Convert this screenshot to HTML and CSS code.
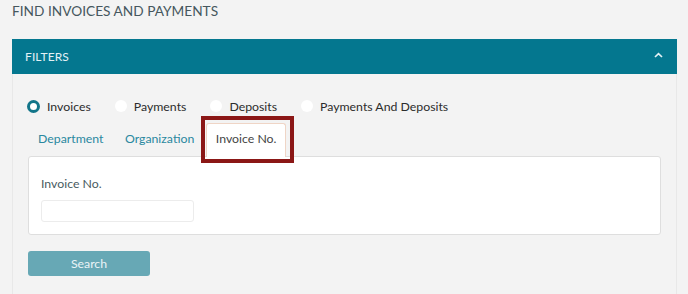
FILE: index.html
```html
<!DOCTYPE html>
<html>
<head>
<meta charset="utf-8">
<link rel="stylesheet" href="styles.css">
</head>
<body>
<div class="page">
  <h1 class="title">FIND INVOICES AND PAYMENTS</h1>
  <section class="panel">
    <header class="panel-head">
      <span class="panel-title">FILTERS</span>
      <svg class="chevron" width="9" height="6" viewBox="0 0 9 6"><path d="M1 5 L4.5 1.6 L8 5" fill="none" stroke="#e3f1f5" stroke-width="1.7"/></svg>
    </header>
    <div class="panel-body">
      <div class="radios">
        <label class="radio"><span class="dot checked"></span>Invoices</label>
        <label class="radio"><span class="dot"></span>Payments</label>
        <label class="radio"><span class="dot"></span>Deposits</label>
        <label class="radio"><span class="dot"></span>Payments And Deposits</label>
      </div>
      <div class="tabs">
        <span class="tab">Department</span>
        <span class="tab">Organization</span>
        <span class="tab active">Invoice No.<span class="highlight"></span></span>
      </div>
      <div class="card">
        <div class="field-label">Invoice No.</div>
        <div class="input"></div>
      </div>
      <button class="search">Search</button>
    </div>
  </section>
</div>
</body>
</html>
```
FILE: styles.css
```css
* { box-sizing: border-box; }
html, body { margin: 0; padding: 0; }
body {
  background: #f3f3f3;
  font-family: Lato, "Open Sans", sans-serif;
  width: 688px;
  height: 294px;
  overflow: hidden;
}
.page { padding: 0 11px 0 12px; }
.title {
  margin: 0;
  padding-top: 3px;
  height: 39px;
  font-size: 13.7px;
  line-height: 1.2;
  font-weight: 400;
  color: #46575e;
}
.panel {
  border: 1px solid #e8e8e8;
  border-top: none;
  height: 260px;
}
.panel-head {
  background: #04778f;
  height: 35px;
  margin: 0 -1px;
  display: flex;
  align-items: center;
  justify-content: space-between;
  padding: 0 14px 0 13px;
}
.panel-title {
  color: #e3f1f5;
  font-size: 12px;
  letter-spacing: 0.1px;
}
.chevron { margin-top: -3px; }
.panel-body { padding: 24px 15px 0 15px; }
.radios {
  display: flex;
  align-items: center;
  height: 16px;
  margin-left: -1px;
  font-size: 12.3px;
  color: #2c2c2c;
}
.radio { display: flex; align-items: center; margin-right: 24px; }
.dot {
  width: 12px;
  height: 12px;
  border-radius: 50%;
  background: #ffffff;
  margin-right: 7px;
}
.dot.checked {
  width: 13px;
  height: 13px;
  border: 3.5px solid #127589;
}
.tabs {
  display: flex;
  align-items: stretch;
  margin-top: 9px;
  height: 33px;
  font-size: 12.3px;
}
.tab {
  display: flex;
  align-items: center;
  padding: 0 9px 4px 9px;
  border: 1px solid transparent;
  border-bottom: none;
  margin-right: 1.5px;
  color: #2a88a0;
}
.tab.active {
  position: relative;
  z-index: 1;
  margin-bottom: -1px;
  color: #454545;
  background: #ffffff;
  border-color: #efd5c6;
  border-radius: 3px 3px 0 0;
}
.highlight {
  position: absolute;
  top: -8px;
  left: -6px;
  right: -9px;
  bottom: -6px;
  border: 4px solid #8b1716;
  pointer-events: none;
}
.card {
  background: #ffffff;
  border: 1px solid #dedede;
  border-radius: 3px;
  padding: 20px 12px 12px 12px;
}
.field-label {
  font-size: 12.3px;
  line-height: 1.2;
  color: #4a5b61;
}
.input {
  width: 153px;
  height: 22px;
  margin-top: 8px;
  background: #fff;
  border: 1px solid #ececec;
  border-radius: 3px;
}
.search {
  display: block;
  margin-top: 16px;
  width: 122px;
  height: 25px;
  border: none;
  border-radius: 3px;
  background: #67a8b5;
  color: #eaf4f7;
  font-family: Lato, sans-serif;
  font-size: 12.3px;
  padding: 0;
}
```
